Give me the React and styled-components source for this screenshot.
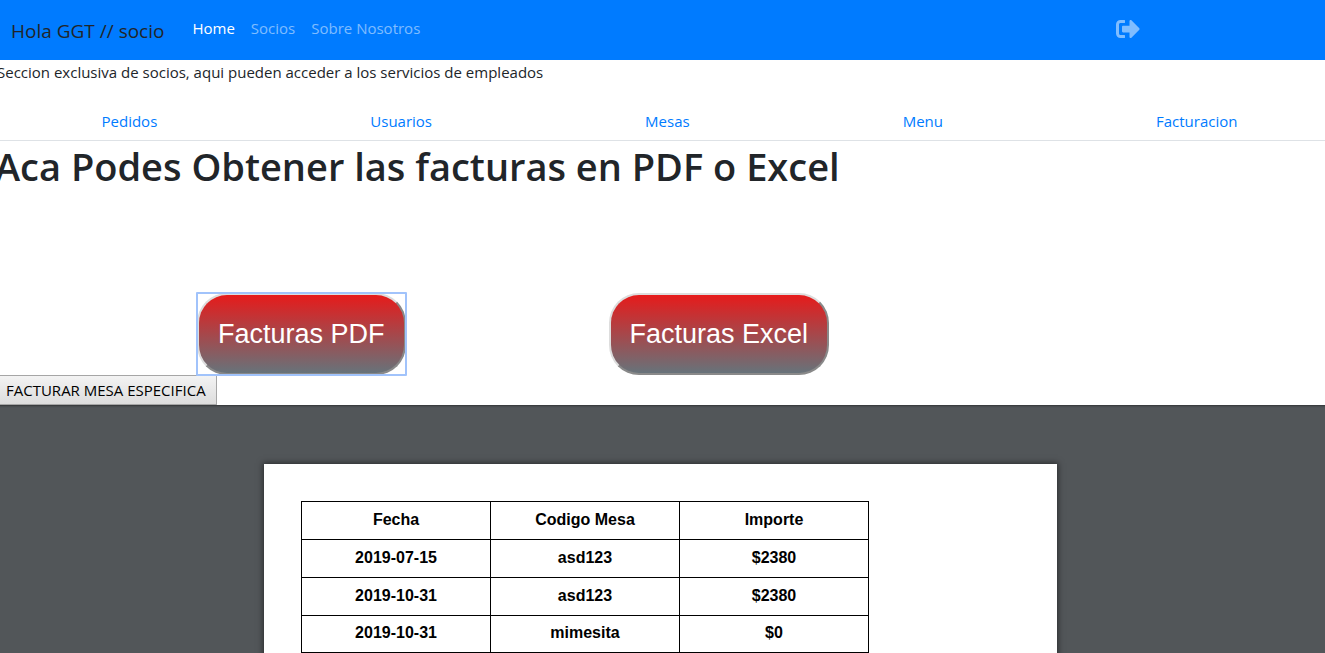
import React from "react";
import styled, { createGlobalStyle } from "styled-components";
import { FaSignOutAlt } from "react-icons/fa";

const GlobalStyle = createGlobalStyle`
  *, *::before, *::after { box-sizing: border-box; }
  body {
    margin: 0;
    background: #fff;
    color: #212529;
    font-family: "Segoe UI", "Open Sans", "Noto Sans", sans-serif;
    font-size: 15px;
    line-height: 24px;
  }
`;

const Shell = styled.div`
  display: flex;
  flex-direction: column;
  height: 100vh;
  overflow: hidden;
`;

const Navbar = styled.header`
  display: flex;
  align-items: center;
  flex: none;
  height: 60px;
  padding: 0 185px 0 11px;
  background: #007bff;
`;

const Brand = styled.span`
  margin-right: 28px;
  padding-top: 2px;
  font-size: 19px;
  color: #212529;
`;

const NavLinks = styled.nav`
  display: flex;
  gap: 16px;
  padding-bottom: 4px;
`;

const NavLink = styled.a`
  color: ${(p) => (p.$active ? "#fff" : "rgba(255, 255, 255, 0.5)")};
  text-decoration: none;
`;

const Logout = styled.a`
  display: flex;
  margin-left: auto;
  padding-bottom: 2px;
  color: rgba(255, 255, 255, 0.5);
  font-size: 24px;
`;

const Intro = styled.p`
  flex: none;
  margin: 0 0 16px -3px;
`;

const Tabs = styled.nav`
  display: flex;
  flex: none;
  margin: 0 -19px 0 -5px;
  border-bottom: 1px solid #dee2e6;
`;

const Tab = styled.a`
  flex: 1 1 auto;
  padding: 9px 16px 7px;
  text-align: center;
  color: #007bff;
  text-decoration: none;
`;

const Title = styled.h1`
  flex: none;
  margin: 1px 0 0 -5px;
  font-size: 38px;
  font-weight: 600;
  line-height: 48px;
`;

const Actions = styled.div`
  display: flex;
  flex: none;
  gap: 203px;
  padding: 103px 0 0 197px;
`;

const ExportButton = styled.button`
  position: relative;
  height: 82px;
  padding: 0 19px;
  border: 2px outset #ddd;
  border-radius: 30px;
  background: linear-gradient(to bottom, #e61b1b, #67737a);
  color: #fff;
  font-family: "Liberation Sans", Arial, sans-serif;
  font-size: 27px;
  outline: none;

  &::after {
    content: "";
    display: ${(p) => (p.$focused ? "block" : "none")};
    position: absolute;
    inset: -3px;
    border: 2px solid #a1c3fb;
    border-radius: 1px;
  }
`;

const BillTable = styled.button`
  flex: none;
  align-self: flex-start;
  height: 30px;
  margin-left: -5px;
  padding: 0 10px;
  border: 1px solid #a6a6a6;
  border-radius: 0;
  background: linear-gradient(to bottom, #f3f3f3, #dddddd);
  color: #000;
  font: inherit;
`;

const Viewer = styled.main`
  display: flex;
  flex: 1;
  justify-content: center;
  align-items: flex-start;
  min-height: 0;
  overflow: hidden;
  padding: 59px 4px 0 0;
  background: #525659;
  box-shadow: inset 0 3px 2px -2px #333638;
`;

const Sheet = styled.section`
  width: 793px;
  min-height: 1122px;
  padding: 37px;
  background: #fff;
  box-shadow: 0 0 6px 1px rgba(0, 0, 0, 0.5);
`;

const Invoices = styled.table`
  border-collapse: collapse;
  table-layout: fixed;
  width: 568px;
  color: #000;
  font-family: "Liberation Sans", Arial, sans-serif;
  font-size: 16px;
  font-weight: 700;
  text-align: center;
`;

const Cell = styled.td`
  height: ${(p) => (p.$last ? "37px" : "38px")};
  padding: 0 0 2px;
  border: 1px solid #000;
  line-height: 18px;
`;

const sections = ["Pedidos", "Usuarios", "Mesas", "Menu", "Facturacion"];
const columns = ["Fecha", "Codigo Mesa", "Importe"];
const rows = [
  ["2019-07-15", "asd123", "$2380"],
  ["2019-10-31", "asd123", "$2380"],
  ["2019-10-31", "mimesita", "$0"],
];

export default function App() {
  return (
    <Shell>
      <GlobalStyle />
      <Navbar>
        <Brand>Hola GGT // socio</Brand>
        <NavLinks>
          <NavLink href="#home" $active>Home</NavLink>
          <NavLink href="#socios">Socios</NavLink>
          <NavLink href="#nosotros">Sobre Nosotros</NavLink>
        </NavLinks>
        <Logout href="#salir" aria-label="Salir">
          <FaSignOutAlt />
        </Logout>
      </Navbar>
      <Intro>Seccion exclusiva de socios, aqui pueden acceder a los servicios de empleados</Intro>
      <Tabs>
        {sections.map((name) => (
          <Tab key={name} href={`#${name.toLowerCase()}`}>{name}</Tab>
        ))}
      </Tabs>
      <Title>Aca Podes Obtener las facturas en PDF o Excel</Title>
      <Actions>
        <ExportButton type="button" $focused>Facturas PDF</ExportButton>
        <ExportButton type="button">Facturas Excel</ExportButton>
      </Actions>
      <BillTable type="button">FACTURAR MESA ESPECIFICA</BillTable>
      <Viewer>
        <Sheet>
          <Invoices>
            <thead>
              <tr>
                {columns.map((name) => (
                  <Cell as="th" scope="col" key={name}>{name}</Cell>
                ))}
              </tr>
            </thead>
            <tbody>
              {rows.map((row, i) => (
                <tr key={i}>
                  {row.map((value, j) => (
                    <Cell key={j} $last={i === rows.length - 1}>{value}</Cell>
                  ))}
                </tr>
              ))}
            </tbody>
          </Invoices>
        </Sheet>
      </Viewer>
    </Shell>
  );
}
